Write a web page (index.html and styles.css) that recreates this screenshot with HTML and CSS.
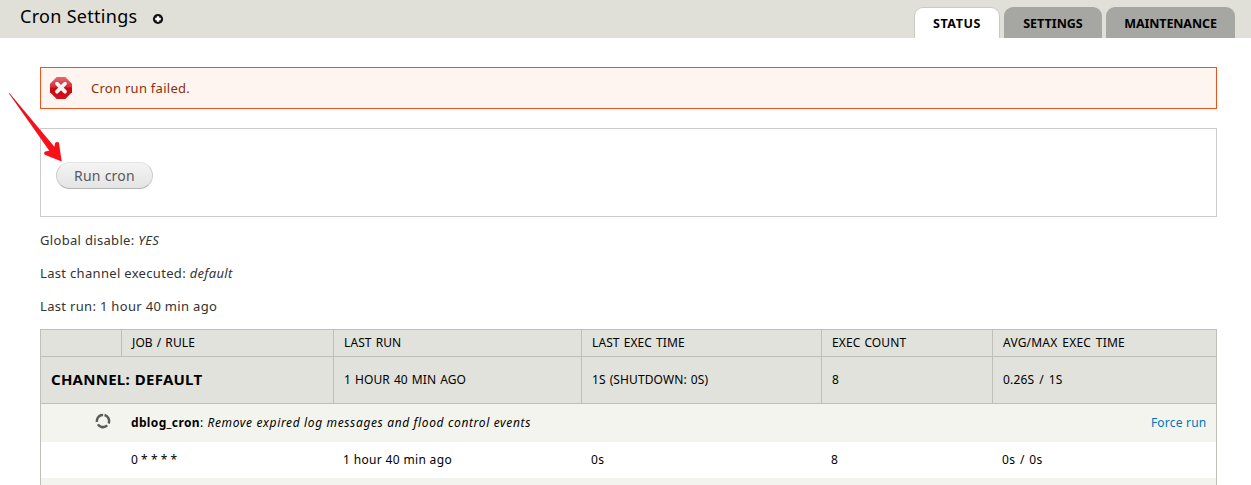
FILE: index.html
```html
<!DOCTYPE html>
<html lang="en">
<head>
<meta charset="utf-8">
<title>Cron Settings</title>
<link rel="stylesheet" href="styles.css">
</head>
<body>
<header class="branding">
  <h1 class="title">Cron Settings</h1>
  <svg class="shortcut" width="12" height="12" viewBox="0 0 12 12"><circle cx="6" cy="6" r="5.100" fill="#111"/><path d="M6 3.200v5.600M3.200 6h5.600" stroke="#fff" stroke-width="2.400"/></svg>
  <nav class="tabs">
    <a class="tab tab-active"><span>STATUS</span></a>
    <a class="tab tab-settings"><span>SETTINGS</span></a>
    <a class="tab tab-maintenance"><span>MAINTENANCE</span></a>
  </nav>
</header>
<main class="page">
  <div class="message">
    <svg class="error-icon" width="24" height="24" viewBox="0 0 24 24">
      <defs><linearGradient id="red" x1="0" y1="0" x2="0" y2="1"><stop offset="0" stop-color="#e26a70"/><stop offset=".45" stop-color="#d5303a"/><stop offset=".5" stop-color="#cb0710"/><stop offset="1" stop-color="#d8101b"/></linearGradient></defs>
      <path d="M7.700 1h8.600L23 7.700v8.600L16.300 23H7.700L1 16.300V7.700z" fill="url(#red)"/>
      <path d="M8.400 8.400l7.200 7.200M15.600 8.400l-7.200 7.200" stroke="#a72027" stroke-width="5.500" stroke-linecap="round" opacity=".35"/>
      <path d="M8 7.700l8 8M16 7.700l-8 8" stroke="#f6f3f3" stroke-width="3.800" stroke-linecap="round"/>
    </svg>
    <span class="message-text">Cron run failed.</span>
  </div>
  <form class="run-box"><button class="run-button" type="button">Run cron</button></form>
  <p class="info">Global disable: <em>YES</em></p>
  <p class="info">Last channel executed: <em>default</em></p>
  <p class="info">Last run: 1 hour 40 min ago</p>
  <table class="jobs">
    <colgroup><col class="c1"><col class="c2"><col class="c3"><col class="c4"><col class="c5"><col class="c6"></colgroup>
    <thead>
      <tr class="head"><th></th><th>JOB / RULE</th><th>LAST RUN</th><th>LAST EXEC TIME</th><th>EXEC COUNT</th><th class="average">AVG/MAX EXEC TIME</th></tr>
      <tr class="channel"><th colspan="2"><span class="channel-name">CHANNEL: DEFAULT</span></th><th>1 HOUR 40 MIN AGO</th><th>1S (SHUTDOWN: 0S)</th><th>8</th><th class="average">0.26S / 1S</th></tr>
    </thead>
    <tbody>
      <tr class="job"><td class="spin"><svg class="spinner" width="16" height="16" viewBox="0 0 16 16"><circle cx="8" cy="8" r="6.100" fill="none" stroke="#5c5c5c" stroke-width="2.500" stroke-dasharray="10.376 2.400" transform="rotate(-76 8 8)"/></svg></td><td colspan="4"><b class="job-name">dblog_cron</b>: <em class="job-desc">Remove expired log messages and flood control events</em></td><td class="right"><a class="force">Force run</a></td></tr>
      <tr class="rule"><td></td><td class="stars">0 * * * *</td><td>1 hour 40 min ago</td><td>0s</td><td>8</td><td class="rule-average">0s / 0s</td></tr>
      <tr class="job"><td></td><td colspan="4"></td><td></td></tr>
    </tbody>
  </table>
</main>
<svg class="arrow" width="56" height="72" viewBox="8 92 56 72">
  <defs><linearGradient id="arrow-fill" x1="0" y1="0" x2="1" y2="1"><stop offset="0" stop-color="#d9141c"/><stop offset=".5" stop-color="#f5131d"/><stop offset="1" stop-color="#ff0d18"/></linearGradient></defs>
  <path d="M8.600 93L9.600 93.200L54.400 146.800L55 143.300Q56.500 141.400 58.900 142.500L61.700 161.500L44.800 154.700Q43.200 152.800 45.200 151.400L49.300 150.700Z" fill="url(#arrow-fill)"/>
</svg>
</body>
</html>
```
FILE: styles.css
```css
* { box-sizing: border-box; }
html { overflow: hidden; }
body { position: relative; margin: 0; height: 485px; overflow: hidden; background: #fff; color: #333; font: 13px/20px "Noto Sans", sans-serif; }
.branding { height: 38px; padding: 0 16px 0 20px; background: #e0e0d8; display: flex; align-items: flex-start; }
.title { margin: 3px 0 0; width: 133px; font-size: 18px; line-height: 26px; font-weight: 400; letter-spacing: .3px; color: #000; white-space: nowrap; }
.shortcut { margin-top: 13px; margin-left: -1px; }
.tabs { margin-left: auto; display: flex; gap: 4px; padding-top: 7px; }
.tab { height: 31px; border-radius: 9px 9px 0 0; background: #a6a7a2; color: #000; font-size: 12.5px; font-weight: 700; line-height: 33px; display: flex; justify-content: center; width: 98px; }
.tab-active { background: #fff; width: 86px; border: 1px solid #c9cac3; border-bottom: 0; line-height: 31px; letter-spacing: .6px; }
.tab-maintenance { width: 129px; letter-spacing: -.1px; }
.page { height: 447px; overflow: hidden; padding: 29px 34px 0 40px; }
.message { height: 42px; border: 1px solid #ed541d; background: #fef5f1; color: #8c2e0b; display: flex; align-items: center; padding-left: 8px; }
.message-text { margin-left: 18px; letter-spacing: .27px; }
.run-box { height: 89px; margin: 19px 0 0; border: 1px solid #ccc; padding: 33px 15px; }
.run-button { display: block; width: 97px; height: 27px; padding: 0; border: 1px solid #cdcdcd; border-top-color: #e4e4e4; border-bottom-color: #b4b4b4; border-radius: 14px; background: linear-gradient(#f4f4f4, #e4e4e4); color: #5a5a5a; font: 14px/24px "Noto Sans", sans-serif; letter-spacing: .25px; }
.info { margin: 0 0 13px; letter-spacing: .32px; }
.run-box + .info { margin-top: 13px; }
.jobs { table-layout: fixed; width: 1177px; border-collapse: collapse; border: 1px solid #bebfb9; border-bottom: 0; color: #000; font-size: 12px; line-height: 18px; }
.c1 { width: 81px; }
.c2 { width: 212px; }
.c3 { width: 248px; }
.c4 { width: 240px; }
.c5 { width: 171px; }
.c6 { width: 224px; }
.jobs th { border: 1px solid #bebfb9; background: #e1e2dc; font-weight: 400; text-align: left; padding: 0 10px; white-space: nowrap; letter-spacing: .1px; word-spacing: .8px; }
.jobs .average { letter-spacing: .2px; word-spacing: 1.5px; }
.jobs td { padding: 0 9.5px; white-space: nowrap; letter-spacing: .34px; }
.head { height: 27px; }
.channel { height: 47px; }
.channel-name { font-size: 15px; font-weight: 700; letter-spacing: .25px; }
.job { height: 38px; background: #f3f4ee; }
.job-name { letter-spacing: .35px; }
.job-desc { margin-left: .5px; letter-spacing: .64px; }
.rule { height: 36px; }
.jobs .stars { letter-spacing: .05px; }
.jobs .rule-average { letter-spacing: .4px; word-spacing: 1px; }
.jobs .spin { padding: 0 10.500px 6px; text-align: right; }
.spinner { display: inline-block; vertical-align: middle; }
.jobs .right { text-align: right; }
.force { color: #0074bd; letter-spacing: .22px; }
.arrow { position: absolute; left: 8px; top: 92px; }
```
